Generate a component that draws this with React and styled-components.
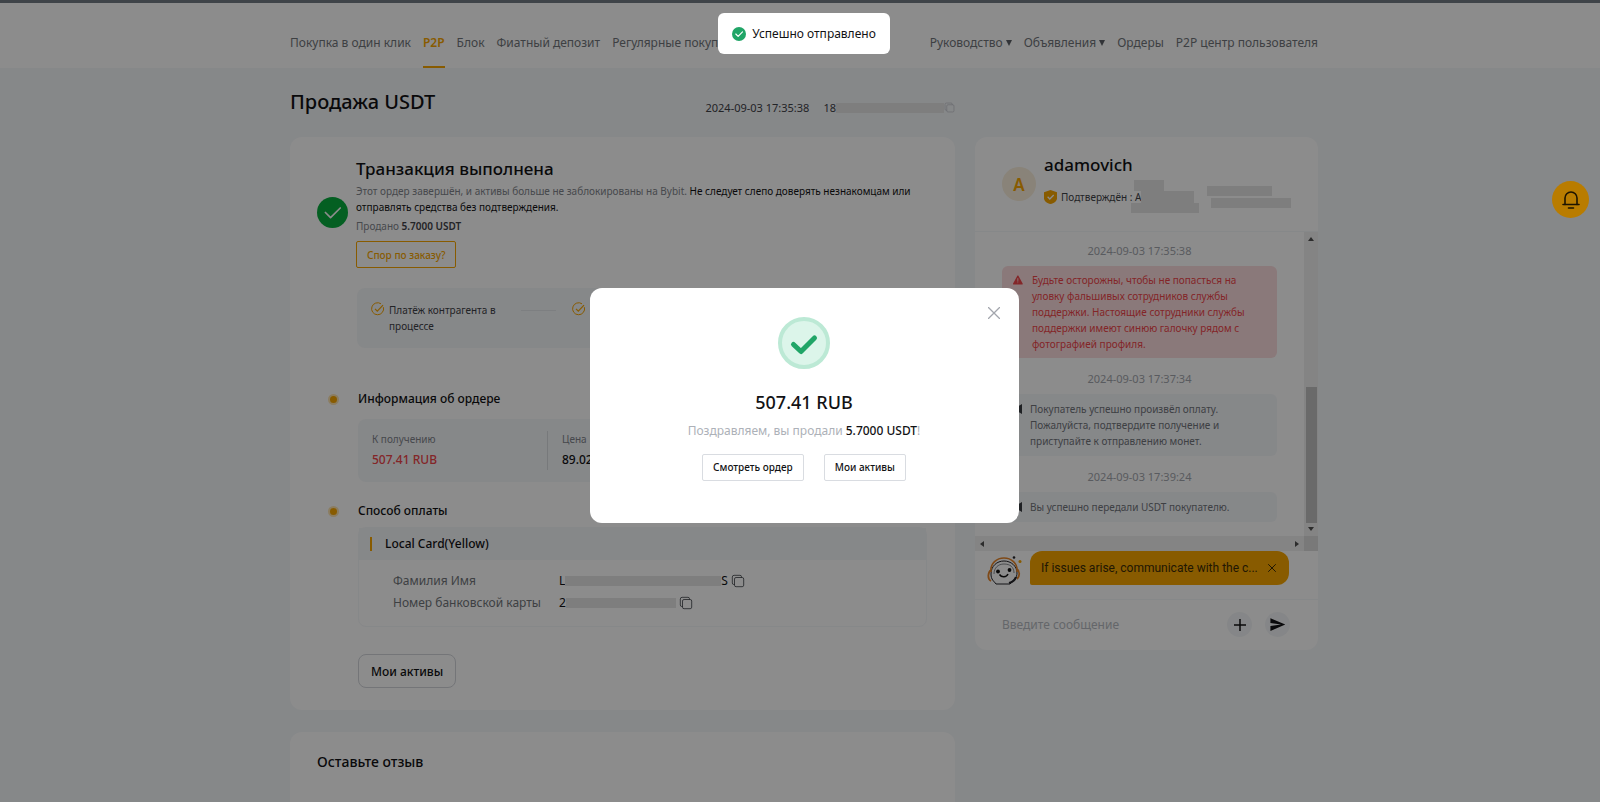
import React, { useState } from 'react'
import styled, { createGlobalStyle, css } from 'styled-components'
import { IoCloseOutline, IoCopyOutline, IoWarning } from 'react-icons/io5'
import { MdSend } from 'react-icons/md'

const GlobalStyle = createGlobalStyle`
  *, *::before {
    box-sizing: border-box;
  }
  body {
    margin: 0;
    overflow: hidden;
    background: #f5f7fa;
    color: #121214;
    font-family: "Noto Sans", "Open Sans", sans-serif;
    font-size: 12px;
  }
  button, input {
    font-family: inherit;
  }
  h1, h2, h3, p, dl, dd, ol {
    margin: 0;
    padding: 0;
  }
`

const smallText = css`
  font-size: 10px;
  line-height: 16px;
`

const leftLinks = [
  { label: 'Покупка в один клик' },
  { label: 'P2P', active: true },
  { label: 'Блок' },
  { label: 'Фиатный депозит' },
  { label: 'Регулярные покупки' },
]

const rightLinks = [
  { label: 'Руководство', menu: true },
  { label: 'Объявления', menu: true },
  { label: 'Ордеры' },
  { label: 'P2P центр пользователя' },
]

const messages = [
  {
    time: '2024-09-03 17:35:38',
    warn: true,
    lines: [
      'Будьте осторожны, чтобы не попасться на',
      'уловку фальшивых сотрудников службы',
      'поддержки. Настоящие сотрудники службы',
      'поддержки имеют синюю галочку рядом с',
      'фотографией профиля.',
    ],
  },
  {
    time: '2024-09-03 17:37:34',
    lines: [
      'Покупатель успешно произвёл оплату.',
      'Пожалуйста, подтвердите получение и',
      'приступайте к отправлению монет.',
    ],
  },
  { time: '2024-09-03 17:39:24', lines: ['Вы успешно передали USDT покупателю.'] },
]

function CheckCircle({ size, fill, mark, width = 2 }) {
  return (
    <svg width={size} height={size} viewBox="0 0 24 24" fill="none" aria-hidden="true">
      <circle cx="12" cy="12" r="12" fill={fill} />
      <path d="M6.5 12l4 4L18 8.5" stroke={mark} strokeWidth={width} strokeLinecap="round" strokeLinejoin="round" />
    </svg>
  )
}

function StepCheck() {
  return (
    <svg width="14" height="14" viewBox="0 0 14 14" fill="none" stroke="#f7a600" aria-hidden="true">
      <path d="M12.4 5.2A6 6 0 1 1 10 1.8" />
      <path d="M4 6.8l2.3 2.3L12 3.2" strokeWidth="1.2" />
    </svg>
  )
}

function Shield() {
  return (
    <svg width="13" height="14" viewBox="0 0 13 14" fill="none" aria-hidden="true">
      <path d="M6.5 0L13 2.2v6c0 3-3.2 5-6.5 5.8C3.2 13.2 0 11.2 0 8.2v-6z" fill="#f7a600" />
      <path d="M3.6 6.8l2.2 2.2 3.9-4" stroke="#fff" strokeWidth="1.3" />
    </svg>
  )
}

function Mascot() {
  return (
    <svg width="36" height="30" viewBox="0 0 36 30" fill="none" aria-hidden="true">
      <path d="M9 28c-2-3-5-4-5-10C4 10 10 5 17 5s13 5 13 12c0 5-3 7-7 11z" fill="#fff" stroke="#26262b" strokeWidth="1" />
      <path d="M4 16C3 7 10 2 17 2s14 5 13 14" stroke="#e8862a" strokeWidth="1.6" />
      <path d="M4 14c-3 2-4 9 0 11M30 13c3 2 3 7 0 10" stroke="#e8862a" strokeWidth="1.8" />
      <path d="M7 18c0-6 4-10 10-10s10 3 10 9" stroke="#8a8d92" strokeWidth="1" />
      <circle cx="11" cy="15.5" r="1.9" fill="#111" />
      <circle cx="22.5" cy="14" r="1.9" fill="#111" />
      <path d="M12.5 18.5c2 3 7 3 8.5-.5" stroke="#111" strokeWidth="1.5" />
      <path d="M22 27c4-1 6-3 7-6" stroke="#26262b" strokeWidth="2.2" />
      <circle cx="27" cy="1.5" r="1.3" fill="#26262b" />
      <circle cx="33" cy="5.5" r="1.5" fill="#f7a600" />
    </svg>
  )
}

function Speaker() {
  return (
    <svg width="12" height="12" viewBox="0 0 12 12" aria-hidden="true">
      <path d="M1 4.5h3L10 1v10L4 7.5H1z" fill="#3a3d42" />
    </svg>
  )
}

function Bell() {
  return (
    <svg width="20" height="20" viewBox="0 0 20 20" fill="none" stroke="#1d1400" strokeWidth="1.6" strokeLinecap="round" aria-hidden="true">
      <path d="M4 14.5V8a6 6 0 0 1 12 0v6.5" />
      <path d="M2 14.5h16M7.5 18h5" />
    </svg>
  )
}

export default function App() {
  const [modalOpen, setModalOpen] = useState(true)
  const [tipOpen, setTipOpen] = useState(true)
  const [message, setMessage] = useState('')

  return (
    <>
      <GlobalStyle />
      <Page>
        <Header>
          <Nav>
            <NavGroup>
              {leftLinks.map((link) => (
                <NavLink key={link.label} href="#" $active={link.active}>{link.label}</NavLink>
              ))}
            </NavGroup>
            <NavGroup>
              {rightLinks.map((link) => (
                <NavLink key={link.label} href="#">
                  {link.label}
                  {link.menu && <Caret />}
                </NavLink>
              ))}
            </NavGroup>
          </Nav>
        </Header>

        <Content>
          <TitleRow>
            <h1>Продажа USDT</h1>
            <OrderMeta>
              <span>2024-09-03 17:35:38</span>
              <OrderId>18<Mask $w={108} $h={10} /><IoCopyOutline /></OrderId>
            </OrderMeta>
          </TitleRow>

          <Columns>
            <Main>
              <OrderCard>
                <Status>
                  <StatusIcon><CheckCircle size={31} fill="#08ad3f" mark="#fff" width={1.3} /></StatusIcon>
                  <StatusBody>
                    <h2>Транзакция выполнена</h2>
                    <Note>
                      Этот ордер завершён, и активы больше не заблокированы на Bybit.{' '}
                      <b>Не следует слепо доверять незнакомцам или</b>{' '}
                      <b>отправлять средства без подтверждения.</b>
                    </Note>
                    <Sold>Продано <strong>5.7000 USDT</strong></Sold>
                    <DisputeButton type="button">Спор по заказу?</DisputeButton>
                  </StatusBody>
                </Status>

                <Steps>
                  <Step><StepCheck /><span>Платёж контрагента в процессе</span></Step>
                  <StepLine aria-hidden="true" />
                  <Step><StepCheck /></Step>
                </Steps>

                <SectionTitle>Информация об ордере</SectionTitle>
                <Figures>
                  <Figure $red>
                    <dt>К получению</dt>
                    <dd>507.41 RUB</dd>
                  </Figure>
                  <Figure>
                    <dt>Цена</dt>
                    <dd>89.02 RUB</dd>
                  </Figure>
                </Figures>

                <SectionTitle>Способ оплаты</SectionTitle>
                <Payment>
                  <PaymentHead>Local Card(Yellow)</PaymentHead>
                  <PaymentList>
                    <dt>Фамилия Имя</dt>
                    <dd>L<Mask $w={156} $h={10} />S<CopyButton type="button" aria-label="Скопировать имя"><IoCopyOutline /></CopyButton></dd>
                    <dt>Номер банковской карты</dt>
                    <dd>2<Mask $w={110} $h={10} /><CopyButton type="button" aria-label="Скопировать номер"><IoCopyOutline /></CopyButton></dd>
                  </PaymentList>
                </Payment>
                <AssetsButton type="button">Мои активы</AssetsButton>
              </OrderCard>

              <ReviewCard>
                <h3>Оставьте отзыв</h3>
              </ReviewCard>
            </Main>

            <Chat>
              <ChatHead>
                <Avatar>A</Avatar>
                <div>
                  <h2>adamovich</h2>
                  <Verified>
                    <Shield />
                    <span>Подтверждён : A</span>
                    <NameMasks>
                      <Mask $w={30} $h={11} $x={3} />
                      <Mask $w={53} $h={12} $x={10} />
                      <Mask $w={68} $h={10} />
                    </NameMasks>
                    <LinkMasks>
                      <Mask $w={65} $h={10} />
                      <Mask $w={80} $h={10} $x={4} />
                    </LinkMasks>
                  </Verified>
                </div>
              </ChatHead>

              <ChatBody>
                <Messages>
                  {messages.map((item) => (
                    <React.Fragment key={item.time}>
                      <Time>{item.time}</Time>
                      <Message $warn={item.warn}>
                        {item.warn ? <IoWarning /> : <Speaker />}
                        <p>{item.lines.map((line) => <span key={line}>{line}</span>)}</p>
                      </Message>
                    </React.Fragment>
                  ))}
                </Messages>
                <ScrollTrack>
                  <Arrow $dir="up" />
                  <Thumb />
                  <Arrow $dir="down" />
                </ScrollTrack>
              </ChatBody>
              <ScrollRow>
                <ScrollBottom>
                  <Arrow $dir="left" />
                  <Arrow $dir="right" />
                </ScrollBottom>
                <ScrollCorner />
              </ScrollRow>

              <TipRow>
                <Mascot />
                {tipOpen && (
                  <Tip>
                    <span>If issues arise, communicate with the c...</span>
                    <TipClose type="button" aria-label="Закрыть подсказку" onClick={() => setTipOpen(false)}>
                      <IoCloseOutline />
                    </TipClose>
                  </Tip>
                )}
              </TipRow>

              <Composer onSubmit={(e) => e.preventDefault()}>
                <input
                  aria-label="Введите сообщение"
                  placeholder="Введите сообщение"
                  value={message}
                  onChange={(e) => setMessage(e.target.value)}
                />
                <RoundButton type="button" aria-label="Добавить файл">
                  <svg width="12" height="12" viewBox="0 0 12 12" stroke="#121214" strokeWidth="1.5"><path d="M6 0v12M0 6h12" /></svg>
                </RoundButton>
                <RoundButton type="submit" aria-label="Отправить"><MdSend size={17} /></RoundButton>
              </Composer>
            </Chat>
          </Columns>
        </Content>
      </Page>

      {modalOpen && (
        <Overlay>
          <Modal role="dialog" aria-modal="true" aria-labelledby="modal-amount">
            <ModalClose type="button" aria-label="Закрыть" onClick={() => setModalOpen(false)}>
              <svg width="12" height="12" viewBox="0 0 12 12" stroke="#a3a6ad" strokeWidth="1.3"><path d="M0 0l12 12M12 0L0 12" /></svg>
            </ModalClose>
            <svg width="52" height="52" viewBox="0 0 52 52" fill="none" aria-hidden="true">
              <circle cx="26" cy="26" r="24" fill="#dcf5ea" stroke="#bce9d5" strokeWidth="4" />
              <path d="M15.5 27.5l7.5 7 13.5-13.5" stroke="#20a567" strokeWidth="5" strokeLinecap="round" strokeLinejoin="round" />
            </svg>
            <Amount id="modal-amount">507.41 RUB</Amount>
            <Congrats>Поздравляем, вы продали <strong>5.7000 USDT</strong>!</Congrats>
            <ModalActions>
              <SmallButton type="button">Смотреть ордер</SmallButton>
              <SmallButton type="button">Мои активы</SmallButton>
            </ModalActions>
          </Modal>
        </Overlay>
      )}

      <ToastArea>
        <Toast role="status">
          <CheckCircle size={14} fill="#20a567" mark="#fff" />
          Успешно отправлено
        </Toast>
      </ToastArea>

      <BellButton type="button" aria-label="Уведомления"><Bell /></BellButton>
    </>
  )
}

const Page = styled.div`
  min-height: 100vh;
  padding-left: 8px;
`

const Header = styled.header`
  margin-left: -8px;
  padding-left: 8px;
  background: #fff;
  border-top: 3px solid #747d85;
  border-bottom: 1px solid #f5f7fa;
`

const Nav = styled.nav`
  display: flex;
  justify-content: space-between;
  max-width: 1028px;
  margin: 0 auto;
`

const NavGroup = styled.div`
  display: flex;
  gap: 12px;
`

const NavLink = styled.a`
  display: flex;
  align-items: center;
  gap: 3px;
  height: 65px;
  padding-top: 16px;
  border-bottom: 2px solid ${({ $active }) => ($active ? '#f7a600' : 'transparent')};
  color: ${({ $active }) => ($active ? '#f7a600' : '#71757a')};
  font-weight: ${({ $active }) => ($active ? 600 : 400)};
  white-space: nowrap;
  text-decoration: none;
`

const Caret = styled.i`
  border: 3px solid transparent;
  border-top: 6px solid #5c6066;
  border-bottom: 0;
`

const Content = styled.main`
  max-width: 1028px;
  margin: 0 auto;
`

const TitleRow = styled.div`
  display: flex;
  align-items: center;
  justify-content: space-between;
  max-width: 665px;
  height: 68px;
  padding-bottom: 3px;
  h1 {
    font-size: 20px;
    font-weight: 500;
  }
`

const OrderMeta = styled.div`
  display: flex;
  gap: 14px;
  padding-top: 12px;
  color: #3f4248;
  font-size: 11px;
`

const OrderId = styled.span`
  display: flex;
  align-items: center;
  svg {
    color: #bfc2c7;
  }
`

const Mask = styled.i`
  display: block;
  flex: none;
  width: ${({ $w }) => $w}px;
  height: ${({ $h }) => $h}px;
  margin-left: ${({ $x = 0 }) => $x}px;
  background: #e6e6e6;
`

const Columns = styled.div`
  display: grid;
  grid-template-columns: minmax(0, 1fr) 343px;
  align-items: start;
  gap: 20px;
`

const Main = styled.div`
  display: flex;
  flex-direction: column;
  gap: 22px;
`

const Card = styled.section`
  background: #fff;
  border-radius: 12px;
`

const OrderCard = styled(Card)`
  padding: 19px 28px 22px 67px;
`

const Status = styled.div`
  display: flex;
  align-items: center;
  gap: 8px;
  margin-left: -40px;
`

const StatusIcon = styled.div`
  display: flex;
  flex: none;
`

const StatusBody = styled.div`
  padding-right: 16px;
  h2 {
    font-size: 17px;
    line-height: 26px;
    font-weight: 500;
  }
`

const Note = styled.p`
  ${smallText}
  margin-top: 1px;
  color: #81858c;
  b {
    color: #121214;
    font-weight: 400;
  }
`

const Sold = styled.p`
  ${smallText}
  margin-top: 3px;
  color: #81858c;
  strong {
    color: #3f4248;
    font-weight: 600;
  }
`

const DisputeButton = styled.button`
  ${smallText}
  height: 27px;
  margin-top: 7px;
  padding: 0 10px;
  border: 1px solid #f7a600;
  border-radius: 2px;
  background: transparent;
  color: #f7a600;
  font-weight: 500;
`

const Steps = styled.ol`
  display: flex;
  align-items: flex-start;
  gap: 16px;
  margin-top: 20px;
  padding: 14px;
  background: #f5f7fa;
  border-radius: 8px;
`

const Step = styled.li`
  ${smallText}
  display: flex;
  gap: 4px;
  width: 134px;
  color: #3f4248;
  svg {
    flex: none;
  }
`

const StepLine = styled.li`
  width: 35px;
  margin-top: 8px;
  border-top: 1px solid #e4e7eb;
  list-style: none;
`

const SectionTitle = styled.h3`
  display: flex;
  align-items: center;
  margin: 41px 0 10px -29px;
  font-size: 12px;
  line-height: 20px;
  font-weight: 500;
  &::before {
    content: '';
    width: 11px;
    height: 11px;
    margin-right: 19px;
    border: 2px solid #fde3b0;
    border-radius: 50%;
    background: #f7a600;
  }
`

const Figures = styled.dl`
  display: grid;
  grid-template-columns: 175px repeat(2, minmax(0, 1fr));
  margin-left: 1px;
  padding: 12px 14px;
  background: #f5f7fa;
  border-radius: 8px;
  & + ${SectionTitle} {
    margin-top: 19px;
    margin-bottom: 6px;
  }
`

const Figure = styled.div`
  & + & {
    padding-left: 14px;
    border-left: 1px solid #d9dce1;
  }
  dt {
    ${smallText}
    color: #81858c;
  }
  dd {
    margin-top: 3px;
    color: ${({ $red }) => ($red ? '#ef454a' : '#121214')};
    font-size: 12px;
    line-height: 20px;
    font-weight: 500;
  }
`

const Payment = styled.div`
  margin-left: 1px;
  border: 1px solid #f5f7fa;
  border-radius: 8px;
`

const PaymentHead = styled.div`
  display: flex;
  align-items: center;
  gap: 13px;
  padding: 6px 11px;
  background: #f5f7fa;
  font-size: 12px;
  line-height: 20px;
  font-weight: 500;
  &::before {
    content: '';
    width: 2px;
    height: 14px;
    background: #f7a600;
  }
`

const PaymentList = styled.dl`
  display: grid;
  grid-template-columns: 150px 1fr;
  column-gap: 16px;
  row-gap: 2px;
  padding: 11px 34px 13px;
  line-height: 20px;
  dt {
    color: #71757a;
    white-space: nowrap;
  }
  dd {
    display: flex;
    align-items: center;
  }
`

const CopyButton = styled.button`
  display: flex;
  margin-left: 3px;
  padding: 0;
  border: 0;
  background: none;
  color: #4c4f55;
  font-size: 14px;
`

const AssetsButton = styled.button`
  height: 34px;
  margin: 27px 0 0 1px;
  padding: 0 12px;
  border: 1px solid #d3d6db;
  border-radius: 8px;
  background: transparent;
  color: #121214;
  font-size: 12px;
  font-weight: 500;
`

const ReviewCard = styled(Card)`
  min-height: 160px;
  padding: 20px 27px;
  h3 {
    font-size: 14px;
    line-height: 20px;
    font-weight: 500;
  }
`

const Chat = styled(Card)`
  overflow: hidden;
`

const ChatHead = styled.div`
  display: flex;
  align-items: flex-start;
  gap: 8px;
  height: 95px;
  padding: 15px 0 0 27px;
  border-bottom: 1px solid #f5f7fa;
  h2 {
    font-size: 17px;
    line-height: 26px;
    font-weight: 500;
  }
`

const Avatar = styled.div`
  display: flex;
  align-items: center;
  justify-content: center;
  width: 34px;
  height: 34px;
  margin-top: 15px;
  border-radius: 50%;
  background: #f9efdc;
  color: #f7a600;
  font-size: 17px;
  font-weight: 600;
`

const Verified = styled.div`
  ${smallText}
  display: flex;
  align-items: center;
  gap: 4px;
  margin-top: 2px;
  color: #3f4248;
  white-space: nowrap;
`

const NameMasks = styled.div`
  margin-left: -14px;
`

const LinkMasks = styled.div`
  display: flex;
  flex-direction: column;
  gap: 2px;
  margin-left: 4px;
`

const ChatBody = styled.div`
  display: flex;
`

const Messages = styled.div`
  flex: 1;
  padding: 0 27px 12px;
`

const Time = styled.div`
  padding: 11px 0 7px;
  color: #a3a6ad;
  font-size: 11px;
  line-height: 16px;
  text-align: center;
`

const Message = styled.div`
  ${smallText}
  display: flex;
  gap: ${({ $warn }) => ($warn ? 8 : 6)}px;
  margin-bottom: 2px;
  padding: ${({ $warn }) => ($warn ? '6px 10px' : '7px 10px')};
  border-radius: 6px;
  background: ${({ $warn }) => ($warn ? '#fcdcde' : '#f5f7fa')};
  color: ${({ $warn }) => ($warn ? '#ef454a' : '#71757a')};
  svg {
    flex: none;
    width: 12px;
    height: 12px;
    margin-top: 2px;
  }
  span {
    display: block;
    white-space: nowrap;
  }
`

const ScrollTrack = styled.div`
  display: flex;
  flex-direction: column;
  align-items: center;
  gap: 4px;
  width: 14px;
  padding: 5px 0;
  background: #f1f1f1;
`

const Thumb = styled.i`
  width: 11px;
  height: 136px;
  margin-top: auto;
  background: #c1c1c1;
`

const turns = { up: 0, right: 90, down: 180, left: 270 }

const Arrow = styled.i`
  border: 3px solid transparent;
  border-bottom: 4px solid #505050;
  border-top: 0;
  transform: rotate(${({ $dir }) => turns[$dir]}deg);
`

const ScrollRow = styled.div`
  display: flex;
  height: 15px;
`

const ScrollBottom = styled.div`
  display: flex;
  flex: 1;
  align-items: center;
  justify-content: space-between;
  padding: 0 4px;
  background: #f1f1f1;
`

const ScrollCorner = styled.i`
  width: 14px;
  background: #dcdcdc;
`

const TipRow = styled.div`
  display: flex;
  align-items: flex-start;
  gap: 7px;
  padding: 0 29px 13px 12px;
  border-bottom: 1px solid #f5f7fa;
  & > svg {
    flex: none;
    margin-top: 5px;
  }
`

const Tip = styled.div`
  display: flex;
  flex: 1;
  align-items: center;
  justify-content: space-between;
  min-width: 0;
  height: 34px;
  padding: 0 9px 0 11px;
  border-radius: 12px 12px 12px 2px;
  background: #f7a600;
  color: #3d2c08;
  font-family: Roboto, "Noto Sans", sans-serif;
  white-space: nowrap;
`

const TipClose = styled.button`
  display: flex;
  padding: 0;
  border: 0;
  background: none;
  color: #3d2c08;
  font-size: 16px;
`

const Composer = styled.form`
  display: flex;
  align-items: center;
  gap: 13px;
  padding: 12px 28px 13px 27px;
  input {
    flex: 1;
    min-width: 0;
    padding: 0;
    border: 0;
    outline: 0;
    background: none;
    font-size: 12px;
    &::placeholder {
      color: #b7bbc1;
    }
  }
`

const RoundButton = styled.button`
  display: flex;
  align-items: center;
  justify-content: center;
  width: 25px;
  height: 25px;
  padding: 0;
  border: 0;
  border-radius: 50%;
  background: #f3f5f7;
  color: #121214;
`

const Overlay = styled.div`
  position: fixed;
  inset: 0;
  display: flex;
  align-items: center;
  justify-content: center;
  padding: 8px 0 0 8px;
  background: rgba(0, 0, 0, 0.45);
`

const Modal = styled.div`
  position: relative;
  display: flex;
  flex-direction: column;
  align-items: center;
  width: 429px;
  padding: 29px 20px 42px;
  border-radius: 12px;
  background: #fff;
`

const ModalClose = styled.button`
  position: absolute;
  top: 19px;
  right: 19px;
  display: flex;
  padding: 0;
  border: 0;
  background: none;
`

const Amount = styled.h2`
  margin-top: 20px;
  font-size: 18px;
  line-height: 26px;
  font-weight: 500;
`

const Congrats = styled.p`
  margin-top: 6px;
  color: #adb1b8;
  font-size: 12px;
  line-height: 20px;
  strong {
    color: #121214;
    font-weight: 500;
  }
`

const ModalActions = styled.div`
  display: flex;
  gap: 20px;
  margin-top: 13px;
`

const SmallButton = styled.button`
  height: 27px;
  padding: 0 10px;
  border: 1px solid #d9dce1;
  border-radius: 2px;
  background: #fff;
  color: #121214;
  font-size: 10px;
  font-weight: 500;
`

const ToastArea = styled.div`
  position: fixed;
  top: 13px;
  left: 8px;
  right: 0;
  display: flex;
  justify-content: center;
`

const Toast = styled.div`
  display: flex;
  align-items: center;
  gap: 6px;
  height: 41px;
  padding: 0 14px;
  border-radius: 6px;
  background: #fff;
  font-size: 12px;
`

const BellButton = styled.button`
  position: fixed;
  top: 181px;
  right: 11px;
  display: flex;
  align-items: center;
  justify-content: center;
  width: 37px;
  height: 37px;
  padding: 0;
  border: 0;
  border-radius: 50%;
  background: #b97c00;
`
